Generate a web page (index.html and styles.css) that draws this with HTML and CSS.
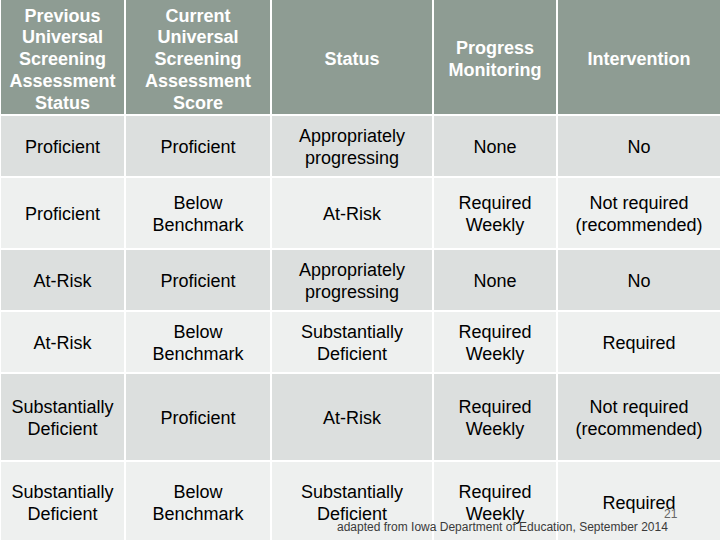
FILE: index.html
```html
<!DOCTYPE html>
<html>
<head>
<meta charset="utf-8">
<link rel="stylesheet" href="styles.css">
</head>
<body>
<div class="slide">
  <div class="table">
    <div class="cell head">Previous<br>Universal<br>Screening<br>Assessment<br>Status</div>
    <div class="cell head">Current<br>Universal<br>Screening<br>Assessment<br>Score</div>
    <div class="cell head">Status</div>
    <div class="cell head">Progress<br>Monitoring</div>
    <div class="cell head">Intervention</div>

    <div class="cell dark">Proficient</div>
    <div class="cell dark">Proficient</div>
    <div class="cell dark">Appropriately<br>progressing</div>
    <div class="cell dark">None</div>
    <div class="cell dark">No</div>

    <div class="cell light">Proficient</div>
    <div class="cell light">Below<br>Benchmark</div>
    <div class="cell light">At-Risk</div>
    <div class="cell light">Required<br>Weekly</div>
    <div class="cell light">Not required<br>(recommended)</div>

    <div class="cell dark">At-Risk</div>
    <div class="cell dark">Proficient</div>
    <div class="cell dark">Appropriately<br>progressing</div>
    <div class="cell dark">None</div>
    <div class="cell dark">No</div>

    <div class="cell light">At-Risk</div>
    <div class="cell light">Below<br>Benchmark</div>
    <div class="cell light">Substantially<br>Deficient</div>
    <div class="cell light">Required<br>Weekly</div>
    <div class="cell light">Required</div>

    <div class="cell dark">Substantially<br>Deficient</div>
    <div class="cell dark">Proficient</div>
    <div class="cell dark">At-Risk</div>
    <div class="cell dark">Required<br>Weekly</div>
    <div class="cell dark">Not required<br>(recommended)</div>

    <div class="cell light">Substantially<br>Deficient</div>
    <div class="cell light">Below<br>Benchmark</div>
    <div class="cell light">Substantially<br>Deficient</div>
    <div class="cell light">Required<br>Weekly</div>
    <div class="cell light">Required</div>
  </div>
  <div class="page-num">21</div>
  <div class="source">adapted from Iowa Department of Education, September 2014</div>
</div>
</body>
</html>
```
FILE: styles.css
```css
html, body {
  margin: 0;
  padding: 0;
  background: #ffffff;
}
body {
  width: 720px;
  height: 540px;
  overflow: hidden;
  font-family: "Liberation Sans", Arial, sans-serif;
}
.slide {
  position: relative;
  width: 720px;
  height: 540px;
  overflow: hidden;
}
.table {
  display: grid;
  grid-template-columns: 123px 144px 160px 122px 1fr;
  grid-template-rows: 114px 60px 70px 60px 60px 86px 80px;
  gap: 2px;
  margin-left: 1px;
}
.cell {
  display: flex;
  align-items: center;
  justify-content: center;
  text-align: center;
  font-size: 18px;
  line-height: 21.7px;
  color: #000000;
  padding-top: 4px;
}
.head {
  background: #8e9c93;
  color: #ffffff;
  font-weight: bold;
  padding-top: 6px;
}
.dark {
  background: #dcdfde;
}
.light {
  background: #eef0ef;
}
.page-num {
  position: absolute;
  left: 664px;
  top: 507px;
  font-size: 12px;
  line-height: 14px;
  color: #666666;
}
.source {
  position: absolute;
  left: 337px;
  top: 520px;
  font-size: 12px;
  line-height: 14px;
  color: #3a3a3a;
  white-space: nowrap;
}
```
